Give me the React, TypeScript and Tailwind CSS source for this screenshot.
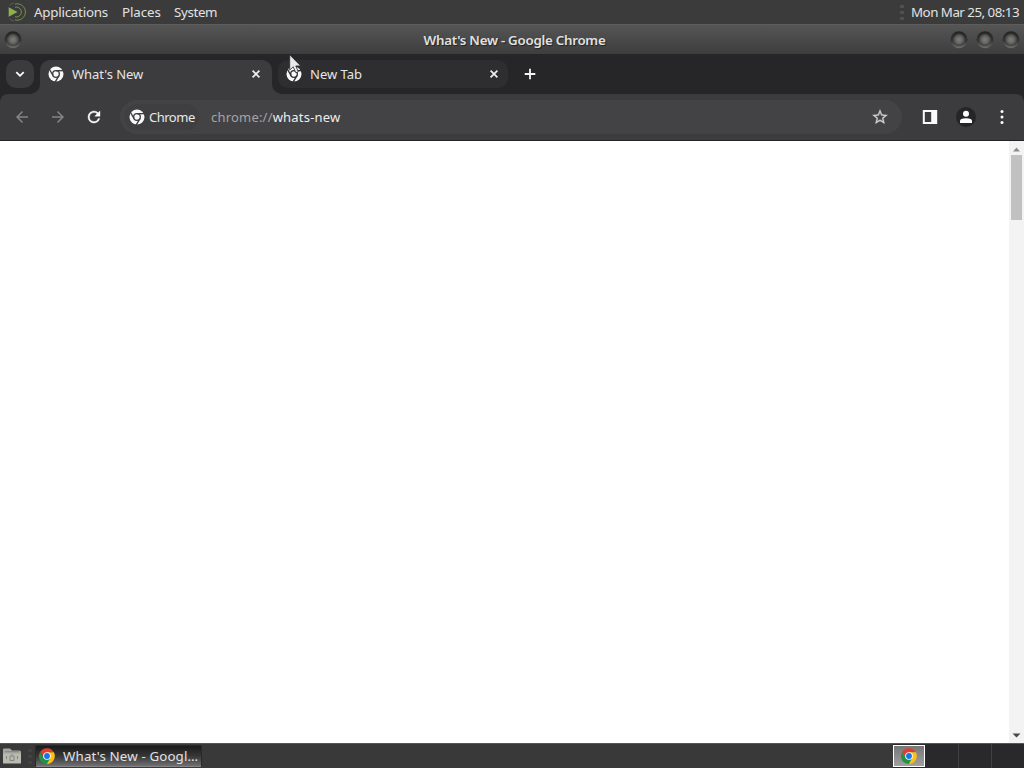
import type { ReactNode } from 'react';

function MonoChrome({ bg }: { bg: string }) {
  return (
    <svg width="16" height="16" viewBox="0 0 24 24" className="shrink-0">
      <circle cx="12" cy="12" r="11.3" fill="#f8f8f9" />
      <g stroke={bg} strokeWidth="2" fill="none">
        <circle cx="12" cy="12" r="5" />
        <path d="M12 7H24" />
        <path d="M12 7H24" transform="rotate(120 12 12)" />
        <path d="M12 7H24" transform="rotate(240 12 12)" />
      </g>
    </svg>
  );
}

function ColorChrome() {
  return (
    <svg width="16" height="16" viewBox="0 0 48 48" className="shrink-0">
      <path d="M24 13H44.8A24 24 0 0 0 3.2 12L14.5 29.5Z" fill="#e33b2e" />
      <path d="M33.5 29.5L23.1 48A24 24 0 0 0 44.8 13H24Z" fill="#fbc116" />
      <path d="M14.5 29.5L3.2 12A24 24 0 0 0 23.1 48L33.5 29.5Z" fill="#229342" />
      <circle cx="24" cy="24" r="11.5" fill="#fff" />
      <circle cx="24" cy="24" r="8.8" fill="#1a73e8" />
    </svg>
  );
}

function Knob() {
  return (
    <svg width="20" height="22" viewBox="0 0 20 22" className="shrink-0">
      <defs>
        <linearGradient id="rim" x1="0" y1="0" x2="0" y2="1">
          <stop offset="0" stopColor="#232323" />
          <stop offset="0.55" stopColor="#333333" />
          <stop offset="1" stopColor="#70706e" />
        </linearGradient>
        <radialGradient id="face">
          <stop offset="0" stopColor="#7c7c79" />
          <stop offset="0.5" stopColor="#6a6a68" />
          <stop offset="1" stopColor="#3c3c3c" />
        </radialGradient>
      </defs>
      <circle cx="10" cy="10.7" r="8.5" fill="url(#rim)" />
      <circle cx="10" cy="10.8" r="6.2" fill="url(#face)" />
    </svg>
  );
}

function Close() {
  return (
    <svg width="16" height="16" viewBox="0 0 16 16" className="shrink-0">
      <path d="M4.6 4.6l6.8 6.8M11.4 4.6l-6.8 6.8" stroke="#eeeeef" strokeWidth="1.7" />
    </svg>
  );
}

function ToolIcon({ children, className }: { children: ReactNode; className: string }) {
  return (
    <svg viewBox="0 0 24 24" className={`size-[18px] shrink-0 ${className}`}>
      {children}
    </svg>
  );
}

function Grip({ className }: { className: string }) {
  return (
    <div className={`flex shrink-0 flex-col gap-[3px] ${className}`}>
      <i className="h-[3px] w-1 bg-[#505051]" />
      <i className="h-[3px] w-1 bg-[#505051]" />
      <i className="h-[3px] w-1 bg-[#505051]" />
    </div>
  );
}

function TopPanel() {
  return (
    <header className="flex h-6 shrink-0 items-center bg-[#3b3b3c] text-[13.33px] text-[#e2e2e2]">
      <svg width="20" height="20" viewBox="0 0 20 20" className="ml-[7px] shrink-0">
        <path d="M1.7 5.2L10.5 10 1.7 14.8Z" fill="#8fb04f" />
        <g fill="none" stroke="#78914f" strokeWidth="1">
          <path d="M8 2.1A8.2 8.2 0 1 1 8 17.9" />
          <path d="M8 5.2A5 5 0 1 1 8 14.8" />
          <path d="M2.5 3.2A9 9 0 0 1 7 1.2M2.5 16.8A9 9 0 0 0 7 18.8" strokeOpacity=".45" />
        </g>
      </svg>
      <nav className="ml-[7px] flex gap-[14px] pt-0.5 tracking-[-0.22px] whitespace-nowrap">
        <span className="w-[74px]">Applications</span>
        <span className="w-[38px] tracking-[-0.1px]">Places</span>
        <span className="tracking-[-0.35px]">System</span>
      </nav>
      <Grip className="ml-auto" />
      <time className="ml-[7px] w-[113px] pt-0.5 tracking-[-0.51px] whitespace-nowrap">Mon Mar 25, 08:13</time>
    </header>
  );
}

function TitleBar() {
  return (
    <div className="flex h-[30px] shrink-0 items-center border-t border-[#5c5c5d] bg-linear-to-b from-[#555556] to-[#3e3e3f] px-[3px]">
      <Knob />
      <h1 className="flex-1 pt-0.5 pl-[57px] text-center text-[13.33px] font-semibold tracking-[-0.27px] text-[#e0e0e0] [text-shadow:1px_1px_1px_#222]">
        What's New - Google Chrome
      </h1>
      <div className="flex gap-[6px]">
        <Knob />
        <Knob />
        <Knob />
      </div>
    </div>
  );
}

function TabStrip() {
  return (
    <div className="flex h-10 shrink-0 bg-[#262628] text-[13px] text-[#e5e5e6]">
      <button className="mt-[6px] ml-[6px] grid size-7 shrink-0 place-items-center rounded-[10px] bg-[#3b3b3d]">
        <svg width="12" height="12" viewBox="0 0 12 12">
          <path d="M2.3 4.2L6 7.8 9.7 4.2" fill="none" stroke="#fff" strokeWidth="1.8" />
        </svg>
      </button>
      <div className="ml-[-4px] flex shrink-0 pt-[6px]">
        <svg width="10" height="10" className="self-end">
          <path d="M10 0A10 10 0 0 1 0 10H10Z" fill="#3c3c3e" />
        </svg>
        <div className="flex h-[34px] w-[232px] items-center rounded-t-[10px] bg-[#3c3c3e] pr-2 pb-[6px] pl-2">
          <MonoChrome bg="#3c3c3e" />
          <span className="ml-2 flex-1 pt-0.5 tracking-[-0.05px]">What's New</span>
          <Close />
        </div>
        <svg width="10" height="10" className="self-end">
          <path d="M0 0A10 10 0 0 0 10 10H0Z" fill="#3c3c3e" />
        </svg>
      </div>
      <div className="mt-[6px] ml-[-4px] flex h-7 w-[230px] shrink-0 items-center rounded-[10px] bg-[#2e2e30] pr-[6px] pl-2">
        <MonoChrome bg="#2e2e30" />
        <span className="ml-2 flex-1 pt-0.5">New Tab</span>
        <Close />
      </div>
      <svg width="16" height="16" viewBox="0 0 16 16" className="mt-3 ml-[14px] shrink-0">
        <path d="M8 2.7V13.3M2.7 8H13.3" stroke="#f4f4f4" strokeWidth="1.8" />
      </svg>
    </div>
  );
}

function Toolbar() {
  return (
    <div className="flex h-[47px] shrink-0 items-center rounded-t-[8px] border-b border-[#232325] bg-[#3c3c3e] pr-[13px] pl-[13px] text-[13px]">
      <ToolIcon className="fill-[#858587]">
        <path d="M20 11H7.83l5.59-5.59L12 4l-8 8 8 8 1.41-1.41L7.83 13H20v-2z" />
      </ToolIcon>
      <ToolIcon className="ml-[18px] fill-[#858587]">
        <path d="M12 4l-1.41 1.41L16.17 11H4v2h12.17l-5.58 5.59L12 20l8-8z" />
      </ToolIcon>
      <ToolIcon className="ml-[18px] fill-white stroke-white stroke-[0.5]">
        <path d="M17.65 6.35A7.96 7.96 0 0 0 12 4a8 8 0 1 0 7.73 10h-2.08A6 6 0 1 1 12 6c1.66 0 3.14.69 4.22 1.78L13 11h7V4l-2.35 2.35z" />
      </ToolIcon>
      <div className="ml-[17px] flex h-[34px] flex-1 items-center rounded-full bg-[#434346] pr-[13px] pl-1">
        <div className="flex h-[26px] w-[75px] items-center rounded-full bg-[#3f3f42] pl-[5px] text-[#e7e7e8]">
          <MonoChrome bg="#3f3f42" />
          <span className="ml-1 pt-0.5 tracking-[-0.5px]">Chrome</span>
        </div>
        <span className="ml-[12px] flex-1 pt-0.5 tracking-[0.2px] text-[#a4a4a6]">
          chrome://<span className="text-[#ededee]">whats-new</span>
        </span>
        <ToolIcon className="fill-[#cececf] stroke-[#cececf] stroke-[0.4]">
          <path d="M22 9.24l-7.19-.62L12 2 9.19 8.63 2 9.24l5.46 4.73L5.82 21 12 17.27 18.18 21l-1.63-7.03L22 9.24zM12 15.4l-3.76 2.27 1-4.28-3.32-2.88 4.38-.38L12 6.1l1.71 4.04 4.38.38-3.32 2.88 1 4.28L12 15.4z" />
        </ToolIcon>
      </div>
      <svg width="16" height="16" viewBox="0 0 16 16" className="ml-5 shrink-0">
        <path d="M.8 1H15.2V15H.8ZM2.8 3V13H9.2V3Z" fill="#fafafa" fillRule="evenodd" />
      </svg>
      <svg width="20" height="20" viewBox="0 0 20 20" className="ml-[18px] shrink-0">
        <circle cx="10" cy="10" r="10" fill="#252527" />
        <circle cx="10" cy="6.8" r="3" fill="#fff" />
        <path d="M4 16V14Q4 11.2 10 11.2T16 14V16Z" fill="#fff" />
      </svg>
      <svg width="18" height="18" viewBox="0 0 18 18" className="ml-[17px] shrink-0">
        <g fill="#fff">
          <circle cx="9" cy="3.6" r="1.5" />
          <circle cx="9" cy="9" r="1.5" />
          <circle cx="9" cy="14.4" r="1.5" />
        </g>
      </svg>
    </div>
  );
}

function Page() {
  return (
    <main className="flex min-h-0 flex-1 bg-white">
      <div className="flex-1" />
      <div className="flex w-[15px] flex-col items-center bg-[#f3f3f3]">
        <svg width="15" height="14" viewBox="0 0 15 14">
          <path d="M4 10.5L7.5 6.5 11 10.5Z" fill="#8b8b8b" />
        </svg>
        <div className="h-[65px] w-[11px] bg-[#c1c1c1]" />
        <svg width="15" height="15" viewBox="0 0 15 15" className="mt-auto">
          <path d="M3.5 5.5H11.5L7.5 9.5Z" fill="#484848" />
        </svg>
      </div>
    </main>
  );
}

function BottomPanel() {
  return (
    <footer className="flex h-[25px] shrink-0 items-center border-t border-[#555856] bg-[#39393a]">
      <svg width="20" height="18" viewBox="0 0 20 18" className="ml-[2px] shrink-0">
        <path d="M1 2.5Q1 1.5 2 1.5H8L10 3.5H17.5Q19 3.5 19 5V16H1Z" fill="#a6a8a0" />
        <path d="M1 6.5H19V16.5H1Z" fill="#b9bbb1" />
        <path d="M3 4.7H17" stroke="#83857d" />
        <path d="M8 9H12V13.5H8ZM9.2 8H10.8M4.5 9V12M15.5 9V12" fill="none" stroke="#85877f" />
      </svg>
      <Grip className="ml-[6px] opacity-40" />
      <div className="ml-[3px] flex h-[22px] w-[167px] shrink-0 items-center rounded-[2px] border border-[#29292a] border-b-[#858587] bg-linear-to-b from-[#1b1b1c] via-[#373738] to-[#707072] pl-[3px] text-[13.33px] whitespace-nowrap text-[#e2e2e2]">
        <ColorChrome />
        <span className="ml-2 pt-0.5 tracking-[0.13px]">What's New - Googl…</span>
      </div>
      <div className="ml-auto flex h-6 w-[131px] shrink-0 bg-[#29292b]">
        <div className="mt-px flex h-[22px] w-8 shrink-0 items-center justify-center border border-white bg-linear-to-b from-[#777] to-[#a0a0a0]">
          <ColorChrome />
        </div>
        <div className="w-[34px] border-r border-[#414143]" />
        <div className="w-[33px] border-r border-[#414143]" />
      </div>
    </footer>
  );
}

export default function App() {
  return (
    <div className="relative flex h-[768px] w-[1024px] flex-col overflow-hidden bg-[#262628] font-['Noto_Sans',sans-serif]">
      <TopPanel />
      <TitleBar />
      <TabStrip />
      <Toolbar />
      <Page />
      <BottomPanel />
      <svg width="14" height="21" viewBox="0 0 14 21" className="absolute top-[54px] left-[289px]">
        <path d="M.7.8V16.1L4.2 12.8 6.8 18.8 9.3 17.7 6.8 11.9H11.7Z" fill="#e9e9ea" stroke="#29292a" strokeWidth=".8" />
      </svg>
    </div>
  );
}
